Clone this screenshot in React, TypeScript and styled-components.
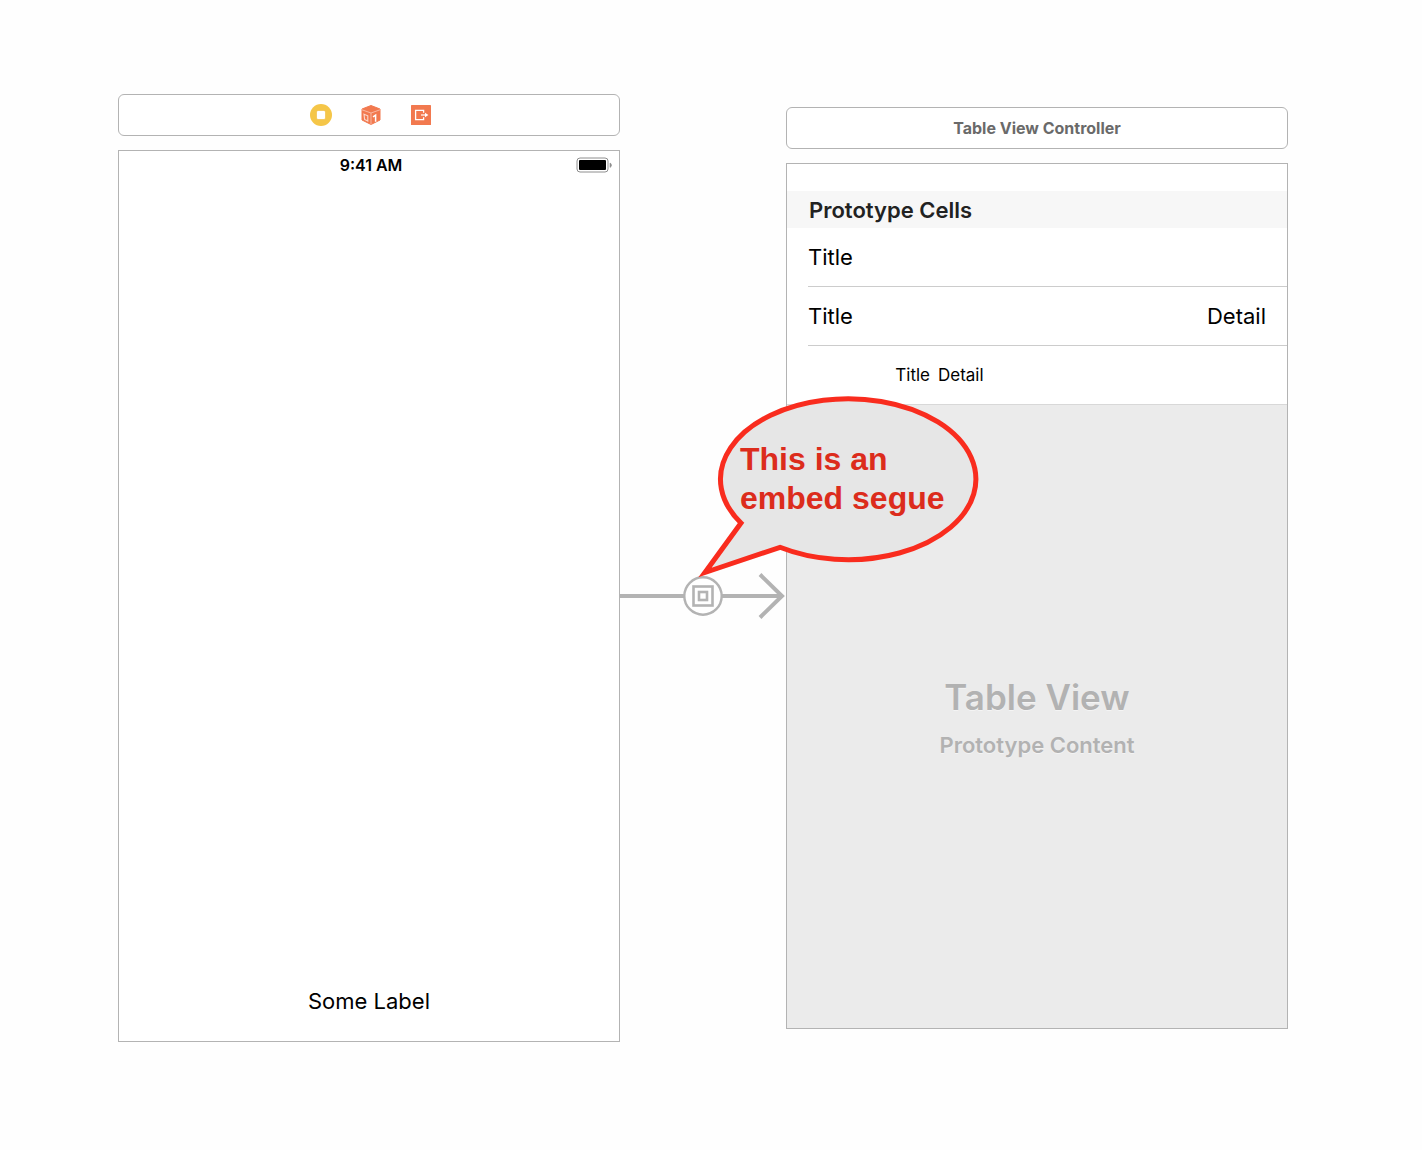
import React from "react";
import styled, { createGlobalStyle } from "styled-components";

const GlobalStyle = createGlobalStyle`
  *, *::before, *::after { box-sizing: border-box; }
  body {
    margin: 0;
    background: #fefefe;
    color: #000;
    font-family: Inter, "Liberation Sans", sans-serif;
  }
`;

const line = "#b3b3b3";

const Storyboard = styled.main`
  display: grid;
  grid-template-columns: 1fr 166px 1fr;
  align-items: center;
  padding: 94px 134px 94px 118px;
`;

const Scene = styled.section`
  display: flex;
  flex-direction: column;
  gap: 14px;
`;

const Dock = styled.header`
  display: flex;
  align-items: center;
  justify-content: center;
  gap: 28px;
  height: 42px;
  border: 1px solid ${line};
  border-radius: 6px;
  background: #fff;
`;

const IconDock = styled(Dock)`
  padding-left: 3px;
`;

const DockButton = styled.button`
  display: block;
  width: 22px;
  height: 22px;
  padding: 0;
  border: 0;
  background: none;
`;

const SceneName = styled.h2`
  margin: 0;
  font-size: 16px;
  line-height: 20px;
  font-weight: 700;
  color: #6a6a6a;
`;

const Screen = styled.div<{ $ratio: string; $fill: string }>`
  display: flex;
  flex-direction: column;
  aspect-ratio: ${(p) => p.$ratio};
  border: 1px solid ${line};
  background: ${(p) => p.$fill};
`;

const StatusBar = styled.div`
  display: grid;
  grid-template-columns: 1fr auto 1fr;
  align-items: center;
  height: 27px;
  padding: 0 7px 0 11px;
`;

const Time = styled.time`
  grid-column: 2;
  font-size: 16px;
  line-height: 20px;
  font-weight: 600;
`;

const Battery = styled.svg`
  justify-self: end;
`;

const BottomLabel = styled.p`
  margin: auto 0 0;
  padding-bottom: 26px;
  text-align: center;
  font-size: 22px;
  line-height: 28px;
`;

const TableHeader = styled.h3`
  margin: 0;
  padding: 5px 22px 4px;
  background: #f7f7f7;
  color: #222;
  font-size: 22px;
  line-height: 28px;
  font-weight: 600;
`;

const TableTop = styled.div`
  padding-top: 27px;
  background: #fff;
`;

const Cells = styled.ul`
  margin: 0;
  padding: 0;
  list-style: none;
  background: #fff;
  border-bottom: 1px solid #d8d8d8;
`;

const Cell = styled.li`
  display: flex;
  align-items: center;
  justify-content: space-between;
  height: 59px;
  margin-left: 21px;
  padding-right: 21px;
  border-bottom: 1px solid #ccc;
  font-size: 22px;
  line-height: 28px;
`;

const CompactCell = styled.li`
  display: grid;
  grid-template-columns: 143px 1fr;
  align-items: center;
  column-gap: 8px;
  height: 58px;
  font-size: 17px;
  line-height: 20px;
`;

const CompactTitle = styled.span`
  text-align: right;
`;

const Placeholder = styled.div`
  flex: 1;
  display: flex;
  flex-direction: column;
  align-items: center;
  justify-content: center;
  gap: 12px;
  color: #b2b2b2;
  text-shadow: 0 1px 0 #f4f4f4;
`;

const PlaceholderTitle = styled.strong`
  font-size: 35px;
  line-height: 44px;
  font-weight: 600;
`;

const PlaceholderNote = styled.span`
  font-size: 22px;
  line-height: 28px;
  font-weight: 600;
`;

const Segue = styled.div`
  position: relative;
  z-index: 1;
  margin-top: 56px;
`;

const Connector = styled.svg`
  display: block;
  width: 100%;
`;

const Callout = styled.div`
  position: absolute;
  left: 75px;
  bottom: 40px;
  width: 284px;
  height: 186px;
  padding: 47px 0 0 45px;
`;

const CalloutShape = styled.svg`
  position: absolute;
  inset: 0;
`;

const CalloutText = styled.p`
  position: relative;
  margin: 0;
  color: #dc2c1c;
  font-family: "Liberation Sans", Arial, sans-serif;
  font-size: 32px;
  line-height: 39px;
  font-weight: 700;
  white-space: nowrap;
`;

const ControllerIcon = () => (
  <svg width="22" height="22" viewBox="0 0 22 22" aria-hidden="true">
    <circle cx="11" cy="11" r="11" fill="#f5c648" />
    <rect x="6.5" y="6.5" width="9" height="9" rx="1.5" fill="#fff" stroke="#f0b93a" strokeWidth="0.6" />
  </svg>
);

const ResponderIcon = () => (
  <svg width="22" height="22" viewBox="0 0 22 22" aria-hidden="true">
    <path d="M11 1.5 L20 5 V16 L11 20.5 L2 16 V5 Z" fill="#f2794f" stroke="#f2794f" strokeWidth="1" strokeLinejoin="round" />
    <path d="M2 5.8 L11 9 L20 5.8 M11 9 V20.5" fill="none" stroke="#f9c0ac" strokeWidth="0.9" />
    <path d="M4 10.2 L7.8 11.8 V17 L4.6 15.4 Z" fill="none" stroke="#fbd9cd" strokeWidth="1.1" />
    <path d="M13 12.8 L15.6 11.2 V17.8" fill="none" stroke="#fff" strokeWidth="1.5" />
  </svg>
);

const ExitIcon = () => (
  <svg width="22" height="22" viewBox="0 0 22 22" aria-hidden="true">
    <rect x="1" y="1" width="20" height="20" rx="0.6" fill="#f2794f" />
    <path d="M13.6 8.8 V6.4 H5.6 V15.6 H13.6 V13.2" fill="none" stroke="#fff" strokeWidth="1.3" />
    <path d="M11 11 H16" fill="none" stroke="#fff" strokeWidth="1.2" />
    <path d="M15 8.8 L18.4 11 L15 13.2 Z" fill="#fff" />
  </svg>
);

export default function App() {
  return (
    <>
      <GlobalStyle />
      <Storyboard>
        <Scene aria-label="View Controller">
          <IconDock>
            <DockButton type="button" aria-label="View Controller">
              <ControllerIcon />
            </DockButton>
            <DockButton type="button" aria-label="First Responder">
              <ResponderIcon />
            </DockButton>
            <DockButton type="button" aria-label="Exit">
              <ExitIcon />
            </DockButton>
          </IconDock>
          <Screen $ratio="502 / 892" $fill="#fff">
            <StatusBar>
              <Time>9:41 AM</Time>
              <Battery width="36" height="16" viewBox="0 0 36 16" role="img" aria-label="Battery full">
                <rect x="1" y="1" width="31" height="14" rx="3" fill="#fff" stroke="#8e8e8e" />
                <rect x="3" y="3" width="27" height="10" rx="1" fill="#000" />
                <path d="M34 6 A2.4 2.4 0 0 1 34 10.4 Z" fill="#8e8e8e" stroke="#8e8e8e" strokeWidth="0.6" />
              </Battery>
            </StatusBar>
            <BottomLabel>Some Label</BottomLabel>
          </Screen>
        </Scene>

        <Segue>
          <Callout>
            <CalloutShape width="284" height="186" viewBox="696 394 284 186" aria-hidden="true">
              <path
                d="M742 524 A127.7 80.5 0 1 1 781 548.3 L706 573.5 Z"
                fill="#e6e6e6"
                stroke="#f92c1e"
                strokeWidth="5"
                strokeMiterlimit="10"
              />
            </CalloutShape>
            <CalloutText>
              This is an
              <br />
              embed segue
            </CalloutText>
          </Callout>
          <Connector height="46" viewBox="0 0 166 46" role="img" aria-label="Embed segue">
            <g fill="none" stroke="#b3b3b3">
              <path d="M0 23 H64 M102 23 H163" strokeWidth="4" />
              <path d="M140 1.5 L162 23 L140 44.5" strokeWidth="4" />
              <circle cx="83" cy="23" r="18.7" strokeWidth="2.4" fill="#fff" />
              <rect x="73.5" y="13.5" width="19" height="19" strokeWidth="2.6" />
              <rect x="79" y="19" width="8" height="8" strokeWidth="2.6" />
            </g>
          </Connector>
        </Segue>

        <Scene aria-label="Table View Controller">
          <Dock>
            <SceneName>Table View Controller</SceneName>
          </Dock>
          <Screen $ratio="502 / 866" $fill="#ebebeb">
            <TableTop>
              <TableHeader>Prototype Cells</TableHeader>
            </TableTop>
            <Cells>
              <Cell>
                <span>Title</span>
              </Cell>
              <Cell>
                <span>Title</span>
                <span>Detail</span>
              </Cell>
              <CompactCell>
                <CompactTitle>Title</CompactTitle>
                <span>Detail</span>
              </CompactCell>
            </Cells>
            <Placeholder>
              <PlaceholderTitle>Table View</PlaceholderTitle>
              <PlaceholderNote>Prototype Content</PlaceholderNote>
            </Placeholder>
          </Screen>
        </Scene>
      </Storyboard>
    </>
  );
}
